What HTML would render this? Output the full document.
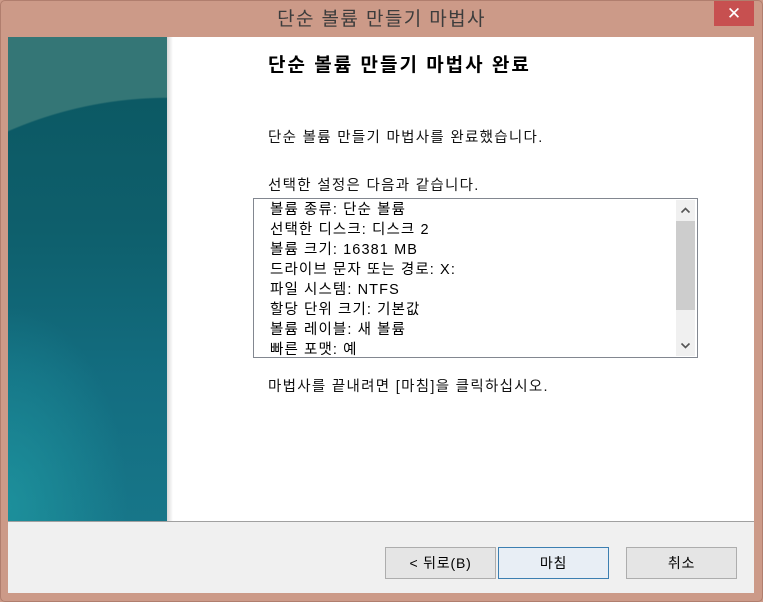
<!DOCTYPE html>
<html><head><meta charset="utf-8"><style>
*{margin:0;padding:0;box-sizing:border-box}
html,body{width:763px;height:602px;overflow:hidden}
body{background:#cc9a88;position:relative;font-family:"Liberation Sans","Noto Sans CJK KR",sans-serif;color:#000}
.frame{position:absolute;left:0;top:0;width:763px;height:602px;background:#cc9a88;border:1px solid #b07e6e;border-radius:5px}
.title{position:absolute;left:0;top:4px;width:763px;text-align:center;font-size:19px;letter-spacing:1.4px;color:#3c3c3c}
.close{position:absolute;left:714px;top:1px;width:40px;height:25px;background:#c75050;color:#fff;font-size:17px;text-align:center;line-height:25px}
.content{position:absolute;left:8px;top:37px;width:746px;height:485px;background:#fff}
.side{position:absolute;left:8px;top:37px;width:159px;height:484px;overflow:hidden;
background:radial-gradient(circle 400px at 160px 460px, rgba(0,0,0,0) 99.6%, #347676 100%),
radial-gradient(ellipse 120px 200px at 0px 470px, rgba(30,150,160,.8), rgba(30,150,160,0)),
linear-gradient(180deg,#0b5660 0%,#0e5f6c 40%,#136d80 70%,#177689 100%)}
.shadow{position:absolute;left:167px;top:37px;width:6px;height:484px;background:linear-gradient(90deg,#d8d8d8,#fff)}
.sep{position:absolute;left:8px;top:521px;width:746px;height:1px;background:#a0a0a0}
.footer{position:absolute;left:8px;top:522px;width:746px;height:71px;background:#f0f0f0}
.h{position:absolute;left:268px;top:50px;font-size:19px;letter-spacing:2px;font-weight:bold}
.t{position:absolute;left:268px;font-size:14.5px;letter-spacing:1.3px;color:#111}
.list{position:absolute;left:253px;top:198px;width:445px;height:160px;border:1px solid #828790;background:#fff;overflow:hidden}
.list .r{font-size:14.5px;letter-spacing:1.1px;line-height:20px;padding-left:16px;height:20px;white-space:nowrap}
.sb{position:absolute;left:422px;top:1px;width:19px;height:156px;background:#f0f0f0}
.thumb{position:absolute;left:0;top:21px;width:19px;height:89px;background:#cdcdcd}
.arr{position:absolute;left:4px;width:11px;height:11px}
.btn{position:absolute;top:547px;width:111px;height:32px;border:1px solid #adadad;background:#e5e5e5;font-size:14px;letter-spacing:0.8px;text-align:center;line-height:30px}
</style></head><body>
<div class="frame"></div>
<div class="title">단순 볼륨 만들기 마법사</div>
<div class="close">✕</div>
<div class="content"></div>
<div class="side"></div>
<div class="shadow"></div>
<div class="h">단순 볼륨 만들기 마법사 완료</div>
<div class="t" style="top:126px">단순 볼륨 만들기 마법사를 완료했습니다.</div>
<div class="t" style="top:174px">선택한 설정은 다음과 같습니다.</div>
<div class="list" style="padding-top:1px">
<div class="r">볼륨 종류: 단순 볼륨</div>
<div class="r">선택한 디스크: 디스크 2</div>
<div class="r">볼륨 크기: 16381 MB</div>
<div class="r">드라이브 문자 또는 경로: X:</div>
<div class="r">파일 시스템: NTFS</div>
<div class="r">할당 단위 크기: 기본값</div>
<div class="r">볼륨 레이블: 새 볼륨</div>
<div class="r">빠른 포맷: 예</div>
<div class="sb"><div class="thumb"></div>
<svg class="arr" style="top:5px" viewBox="0 0 11 11"><path d="M1.5 7.5L5.5 3.5L9.5 7.5" fill="none" stroke="#555" stroke-width="1.6"/></svg>
<svg class="arr" style="top:140px" viewBox="0 0 11 11"><path d="M1.5 3.5L5.5 7.5L9.5 3.5" fill="none" stroke="#555" stroke-width="1.6"/></svg>
</div>
</div>
<div class="t" style="top:375px">마법사를 끝내려면 [마침]을 클릭하십시오.</div>
<div class="sep"></div>
<div class="footer"></div>
<div class="btn" style="left:385px">&lt; 뒤로(B)</div>
<div class="btn" style="left:498px;border-color:#3c7fb1;background:#e8eef5">마침</div>
<div class="btn" style="left:626px">취소</div>
</body></html>
